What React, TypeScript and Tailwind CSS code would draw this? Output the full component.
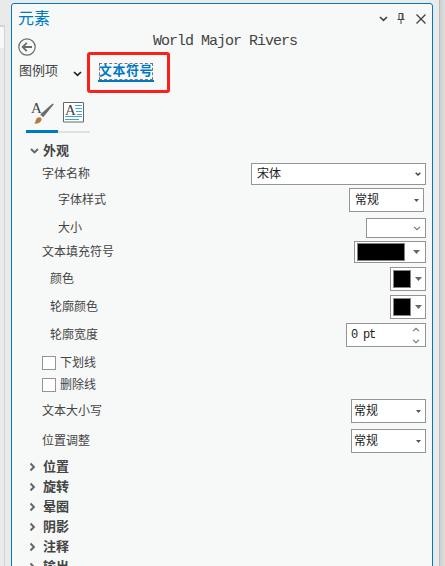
import type { ReactNode } from 'react';
import clsx from 'clsx';

const sections = ['位置', '旋转', '晕圈', '阴影', '注释', '输出'];

const Chevron = ({ className }: { className?: string }) => (
  <svg viewBox="0 0 9 6" fill="none" stroke="currentColor" className={className}>
    <path d="M1 1l3.5 3.4L8 1" />
  </svg>
);

const Caret = ({ className }: { className?: string }) => (
  <svg viewBox="0 0 7 4" fill="currentColor" className={className}>
    <path d="M0 0h7L3.5 4z" />
  </svg>
);

type RowProps = {
  label: string;
  className: string;
  indent?: string;
  children: ReactNode;
};

const Row = ({ label, className, indent = 'pl-[30px]', children }: RowProps) => (
  <div
    className={clsx(
      'flex shrink-0 items-center justify-between pr-1.5',
      indent,
      className,
    )}
  >
    <span>{label}</span>
    {children}
  </div>
);

const box =
  'flex items-center justify-between border border-[#949494] bg-white text-[#1c1c1c]';

const Select = ({ className }: { className: string }) => (
  <div className={clsx(box, 'h-6 w-[75px] pr-1', className)}>
    <span>常规</span>
    <Caret className="h-[3px] w-[5px] text-[#555]" />
  </div>
);

const Swatch = ({ wide = false }: { wide?: boolean }) => (
  <div className={clsx(box, 'pl-0.5', wide ? 'h-[22px] w-[72px] pr-[5px]' : 'h-6 w-9 pr-[3px]')}>
    <span
      className={clsx(
        'h-[18px] border border-[#858585] bg-black',
        wide ? 'w-12' : 'w-[18px]',
      )}
    />
    <Caret className="h-1 w-[7px] text-[#686868]" />
  </div>
);

const Check = ({ label }: { label: string }) => (
  <div className="flex h-[22px] shrink-0 items-center gap-1 pl-[30px]">
    <span className="size-3.5 border border-[#949494] bg-white" />
    <span>{label}</span>
  </div>
);

const TitleBar = () => (
  <div className="flex h-[30px] shrink-0 items-center justify-between pl-1.5 pr-1.5">
    <h1 className="text-base leading-none text-[#0079c1]">元素</h1>
    <div className="flex items-center text-[#444]">
      <Chevron className="mr-[9px] h-[6px] w-[9px] stroke-[1.7]" />
      <svg viewBox="0 0 8 11" fill="none" stroke="currentColor" className="mb-0.5 mr-[11px] h-[11px] w-2">
        <path d="M2 6.5v-6h4v6M.5 6.5h7M4 6.5V11M5.2 1v5" />
      </svg>
      <svg viewBox="0 0 10 10" fill="none" stroke="currentColor" className="size-2.5 stroke-[1.4]">
        <path d="M.5.5l9 9M9.5.5l-9 9" />
      </svg>
    </div>
  </div>
);

const Tabs = () => (
  <div className="flex h-10 shrink-0 items-center pl-[7px]">
    <span className="mt-[-4px] w-[54px] text-[13px]">图例项</span>
    <Chevron className="mt-1 h-[6px] w-[9px] stroke-[1.7] text-[#222]" />
    <div className="ml-[5px] h-[41px] w-[83px] rounded-[3px] border-[3px] border-[#fb2019] pl-2 pt-2">
      <div className="h-[19px] w-14 border-b-2 border-[#0079c1] px-px">
        <div className="flex h-[17px] items-start justify-center whitespace-nowrap border border-dashed border-[#777] text-[13px] font-bold leading-none tracking-[0.6px] text-[#0079c1]">
          文本符号
        </div>
      </div>
    </div>
  </div>
);

const IconTabs = () => (
  <div className="ml-3.5 flex h-[41px] w-16 shrink-0">
    <div className="w-8 border-b-[3px] border-[#0079c1] pl-[5px] pt-2.5">
      <svg viewBox="0 0 24 23" className="h-[23px] w-6 overflow-visible">
        <text x="0" y="11" fontFamily="Liberation Serif, serif" fontSize="15" fill="#444">
          A
        </text>
        <path d="M22.8 2.2L12.2 15.2 9.2 12.6 21.6 1.4z" fill="#6b6b6b" />
        <path d="M8.3 15.2c1.8.3 2.7 1.2 2.2 2.9-.6 2.4-3.3 3.8-7.2 3.7 1.7-1.6 1.1-6.6 5-6.6z" fill="#b87a38" />
      </svg>
    </div>
    <div className="w-8 border-b-2 border-[#e0e2e1] pl-[5px] pt-2.5">
      <svg viewBox="0 0 21 21" className="size-[21px]">
        <path d="M.5.5h20v19.5H.5z" fill="#fff" stroke="#666" />
        <path d="M12 3.5h7M12.5 6.5H19M13 9.5h6M14 12.5h5M2 14.5h17M2 17.5h14" stroke="#4ba1d4" />
        <text x="2" y="12.5" fontFamily="Liberation Serif, serif" fontSize="15" fill="#444">
          A
        </text>
      </svg>
    </div>
  </div>
);

const App = () => (
  <div className="flex h-[566px] w-[445px] overflow-hidden bg-[#eaeaea] text-xs leading-none text-[#444] [font-family:'Liberation_Sans','Noto_Sans_CJK_SC',sans-serif]">
    <div className="mt-[25px] w-[5px] shrink-0 border-r border-t-2 border-[#d2d2d7]">
      <div className="h-[21px] bg-[#f8f8f8]" />
    </div>

    <main className="ml-1.5 mt-[3px] flex h-[580px] w-[422px] shrink-0 flex-col rounded-t-[3px] border border-[#0079c1] bg-[#f7f9f8]">
      <TitleBar />

      <div className="flex h-[18px] shrink-0 items-start pl-1.5">
        <svg viewBox="0 0 18 18" fill="none" stroke="#6a6a6a" className="mt-1 size-[18px] shrink-0">
          <circle cx="9" cy="9" r="8.2" strokeWidth="1.2" />
          <path d="M14 9H5M8.8 4.8L4.6 9l4.2 4.2" strokeWidth="1.8" />
        </svg>
        <p className="ml-[117px] whitespace-pre text-[15px] leading-4 tracking-[-1px] [font-family:'Liberation_Mono',monospace]">
          World Major Rivers
        </p>
      </div>

      <Tabs />
      <IconTabs />

      <div className="flex h-[29px] shrink-0 items-center pl-[18px] pt-1.5">
        <Chevron className="mr-1 h-[6px] w-[9px] stroke-2 text-[#666]" />
        <h2 className="text-[13px] font-bold">外观</h2>
      </div>

      <Row label="字体名称" className="h-6">
        <div className={clsx(box, 'h-[22px] w-[175px] pl-[5px] pr-1')}>
          <span>宋体</span>
          <Chevron className="h-1 w-1.5 stroke-[2.2] text-[#444]" />
        </div>
      </Row>
      <Row label="字体样式" indent="pl-[46px]" className="h-7">
        <Select className="mr-0.5 pl-[5px]" />
      </Row>
      <Row label="大小" indent="pl-[46px]" className="h-7">
        <div className={clsx(box, 'h-5 w-[60px] pr-1')}>
          <Chevron className="ml-auto h-[5px] w-2 stroke-[1.4] text-[#777]" />
        </div>
      </Row>
      <Row label="文本填充符号" className="h-5">
        <Swatch wide />
      </Row>
      <Row label="颜色" indent="pl-[38px]" className="h-[34px]">
        <Swatch />
      </Row>
      <Row label="轮廓颜色" indent="pl-[38px]" className="h-[22px]">
        <Swatch />
      </Row>
      <Row label="轮廓宽度" indent="pl-[38px]" className="h-[34px]">
        <div className={clsx(box, 'h-6 w-20 pl-1 pr-[5px]')}>
          <span className="tracking-[-1.2px] [font-family:'Liberation_Mono',monospace]">
            0 pt
          </span>
          <span className="flex flex-col gap-[7px] text-[#777]">
            <Chevron className="h-[5px] w-2 rotate-180 stroke-[1.4]" />
            <Chevron className="h-[5px] w-2 stroke-[1.4]" />
          </span>
        </div>
      </Row>

      <Check label="下划线" />
      <Check label="删除线" />

      <Row label="文本大小写" className="h-[30px]">
        <Select className="pl-0.5" />
      </Row>
      <Row label="位置调整" className="h-[30px]">
        <Select className="pl-0.5" />
      </Row>

      <div>
        {sections.map(title => (
          <div key={title} className="flex h-5 items-center pl-4">
            <Chevron className="mr-1.5 mt-0.5 h-[6px] w-[9px] -rotate-90 stroke-2 text-[#666]" />
            <h2 className="text-[13px] font-bold">{title}</h2>
          </div>
        ))}
      </div>
    </main>

    <div className="ml-1.5 w-1.5 border-l border-[#bbb] bg-linear-to-r from-[#d0d0d0] to-[#dedede]" />
  </div>
);

export default App;
